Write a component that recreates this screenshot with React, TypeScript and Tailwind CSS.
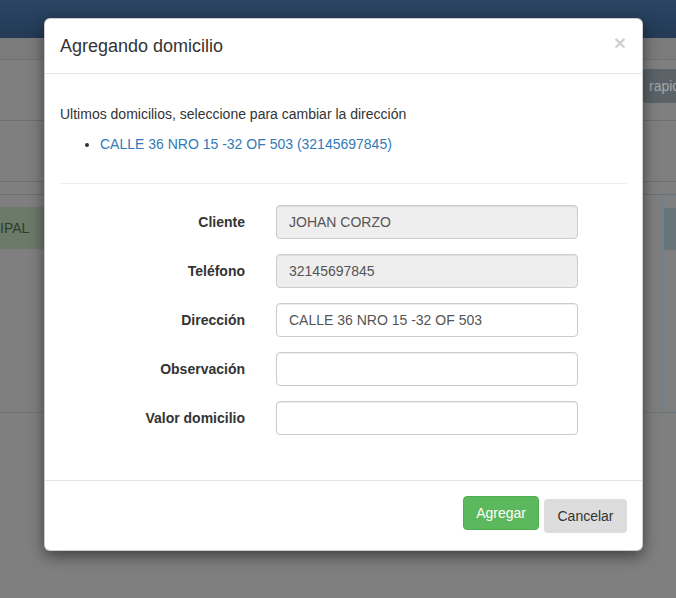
const fields = [
  { label: "Cliente", value: "JOHAN CORZO", disabled: true },
  { label: "Teléfono", value: "32145697845", disabled: true },
  { label: "Dirección", value: "CALLE 36 NRO 15 -32 OF 503", disabled: false },
  { label: "Observación", value: "", disabled: false },
  { label: "Valor domicilio", value: "", disabled: false },
];

function Backdrop() {
  return (
    <div className="flex flex-col">
      <div className="h-[38px] bg-gradient-to-b from-[#2b4564] to-[#243a56]" />
      <div className="h-[22px] bg-[#7b7b7b] border-b border-[#727272]" />
      <div className="h-[61px] border-b border-[#6f6f6f] flex justify-end items-start pt-[9px]">
        <div className="h-[34px] w-[33px] bg-[#5b6368] rounded-l-[3px] overflow-hidden text-[14px] leading-[34px] pl-[6px] text-[#a3a7aa]">
          rapido
        </div>
      </div>
      <div className="h-[61px] border-b border-[#6f6f6f]" />
      <div className="h-[13px] border-b border-[#6f6f6f]" />
      <div className="h-[218px] border-b border-[#727272] flex justify-between pt-[12px]">
        <div className="h-[42px] w-[60px] bg-[#6c7a6a] text-[14px] leading-[42px] text-[#2c3d28] -ml-[15px] pl-[15px]">
          IPAL
        </div>
        <div className="w-[14px] -mt-[12px] h-[217px] border border-r-0 border-[#6b8089] rounded-l-[4px] pt-[12px]">
          <div className="h-[42px] ml-[1px] bg-[#67747a] rounded-l-[2px]" />
        </div>
      </div>
    </div>
  );
}

export default function App() {
  return (
    <div
      className="relative w-[676px] h-[598px] overflow-hidden bg-[#7f7f7f]"
      style={{ fontFamily: '"Liberation Sans", Arial, sans-serif' }}
    >
      <Backdrop />

      <div className="absolute left-[44px] top-[18px] w-[599px] bg-white rounded-[6px] border border-black/20 shadow-[0_5px_15px_rgba(0,0,0,0.5)] text-[#333]">
        <div className="flex items-start justify-between px-[15px] pt-[14px] pb-[14px] border-b border-[#e5e5e5]">
          <h4 className="text-[18px] leading-[26px]">Agregando domicilio</h4>
          <span className="text-[21px] font-bold leading-none text-black/20 -mt-[1px] mr-[1px]">×</span>
        </div>

        <div className="px-[15px] pt-[30px] pb-[45px]">
          <p className="text-[14px] leading-5 mb-[10px]">
            Ultimos domicilios, seleccione para cambiar la dirección
          </p>
          <ul className="list-disc pl-[40px] text-[14px] leading-5">
            <li className="text-[#337ab7] marker:text-[#333]">
              CALLE 36 NRO 15 -32 OF 503 (32145697845)
            </li>
          </ul>
          <hr className="mt-[29px] mb-[21px] border-t border-[#eee]" />

          <div className="flex flex-col gap-[15px]">
            {fields.map((f) => (
              <div key={f.label} className="flex items-start gap-[31px]">
                <label className="w-[185px] text-right text-[14px] font-bold leading-5 pt-[7px]">
                  {f.label}
                </label>
                <div
                  className={
                    "h-[34px] w-[302px] px-[12px] rounded-[4px] border border-[#ccc] text-[14px] leading-[32px] text-[#555] shadow-[inset_0_1px_1px_rgba(0,0,0,0.075)] " +
                    (f.disabled ? "bg-[#eee]" : "bg-white")
                  }
                >
                  {f.value}
                </div>
              </div>
            ))}
          </div>
        </div>

        <div className="flex justify-end items-start gap-[5px] px-[15px] pt-[15px] pb-[17px] border-t border-[#e5e5e5]">
          <button className="h-[34px] px-[12px] rounded-[4px] bg-[#5cb85c] border border-[#4cae4c] text-white text-[14px] leading-5">
            Agregar
          </button>
          <button className="h-[34px] mt-[3px] w-[83px] rounded-[4px] bg-[#ddd] text-[#333] text-[14px] leading-5">
            Cancelar
          </button>
        </div>
      </div>
    </div>
  );
}
